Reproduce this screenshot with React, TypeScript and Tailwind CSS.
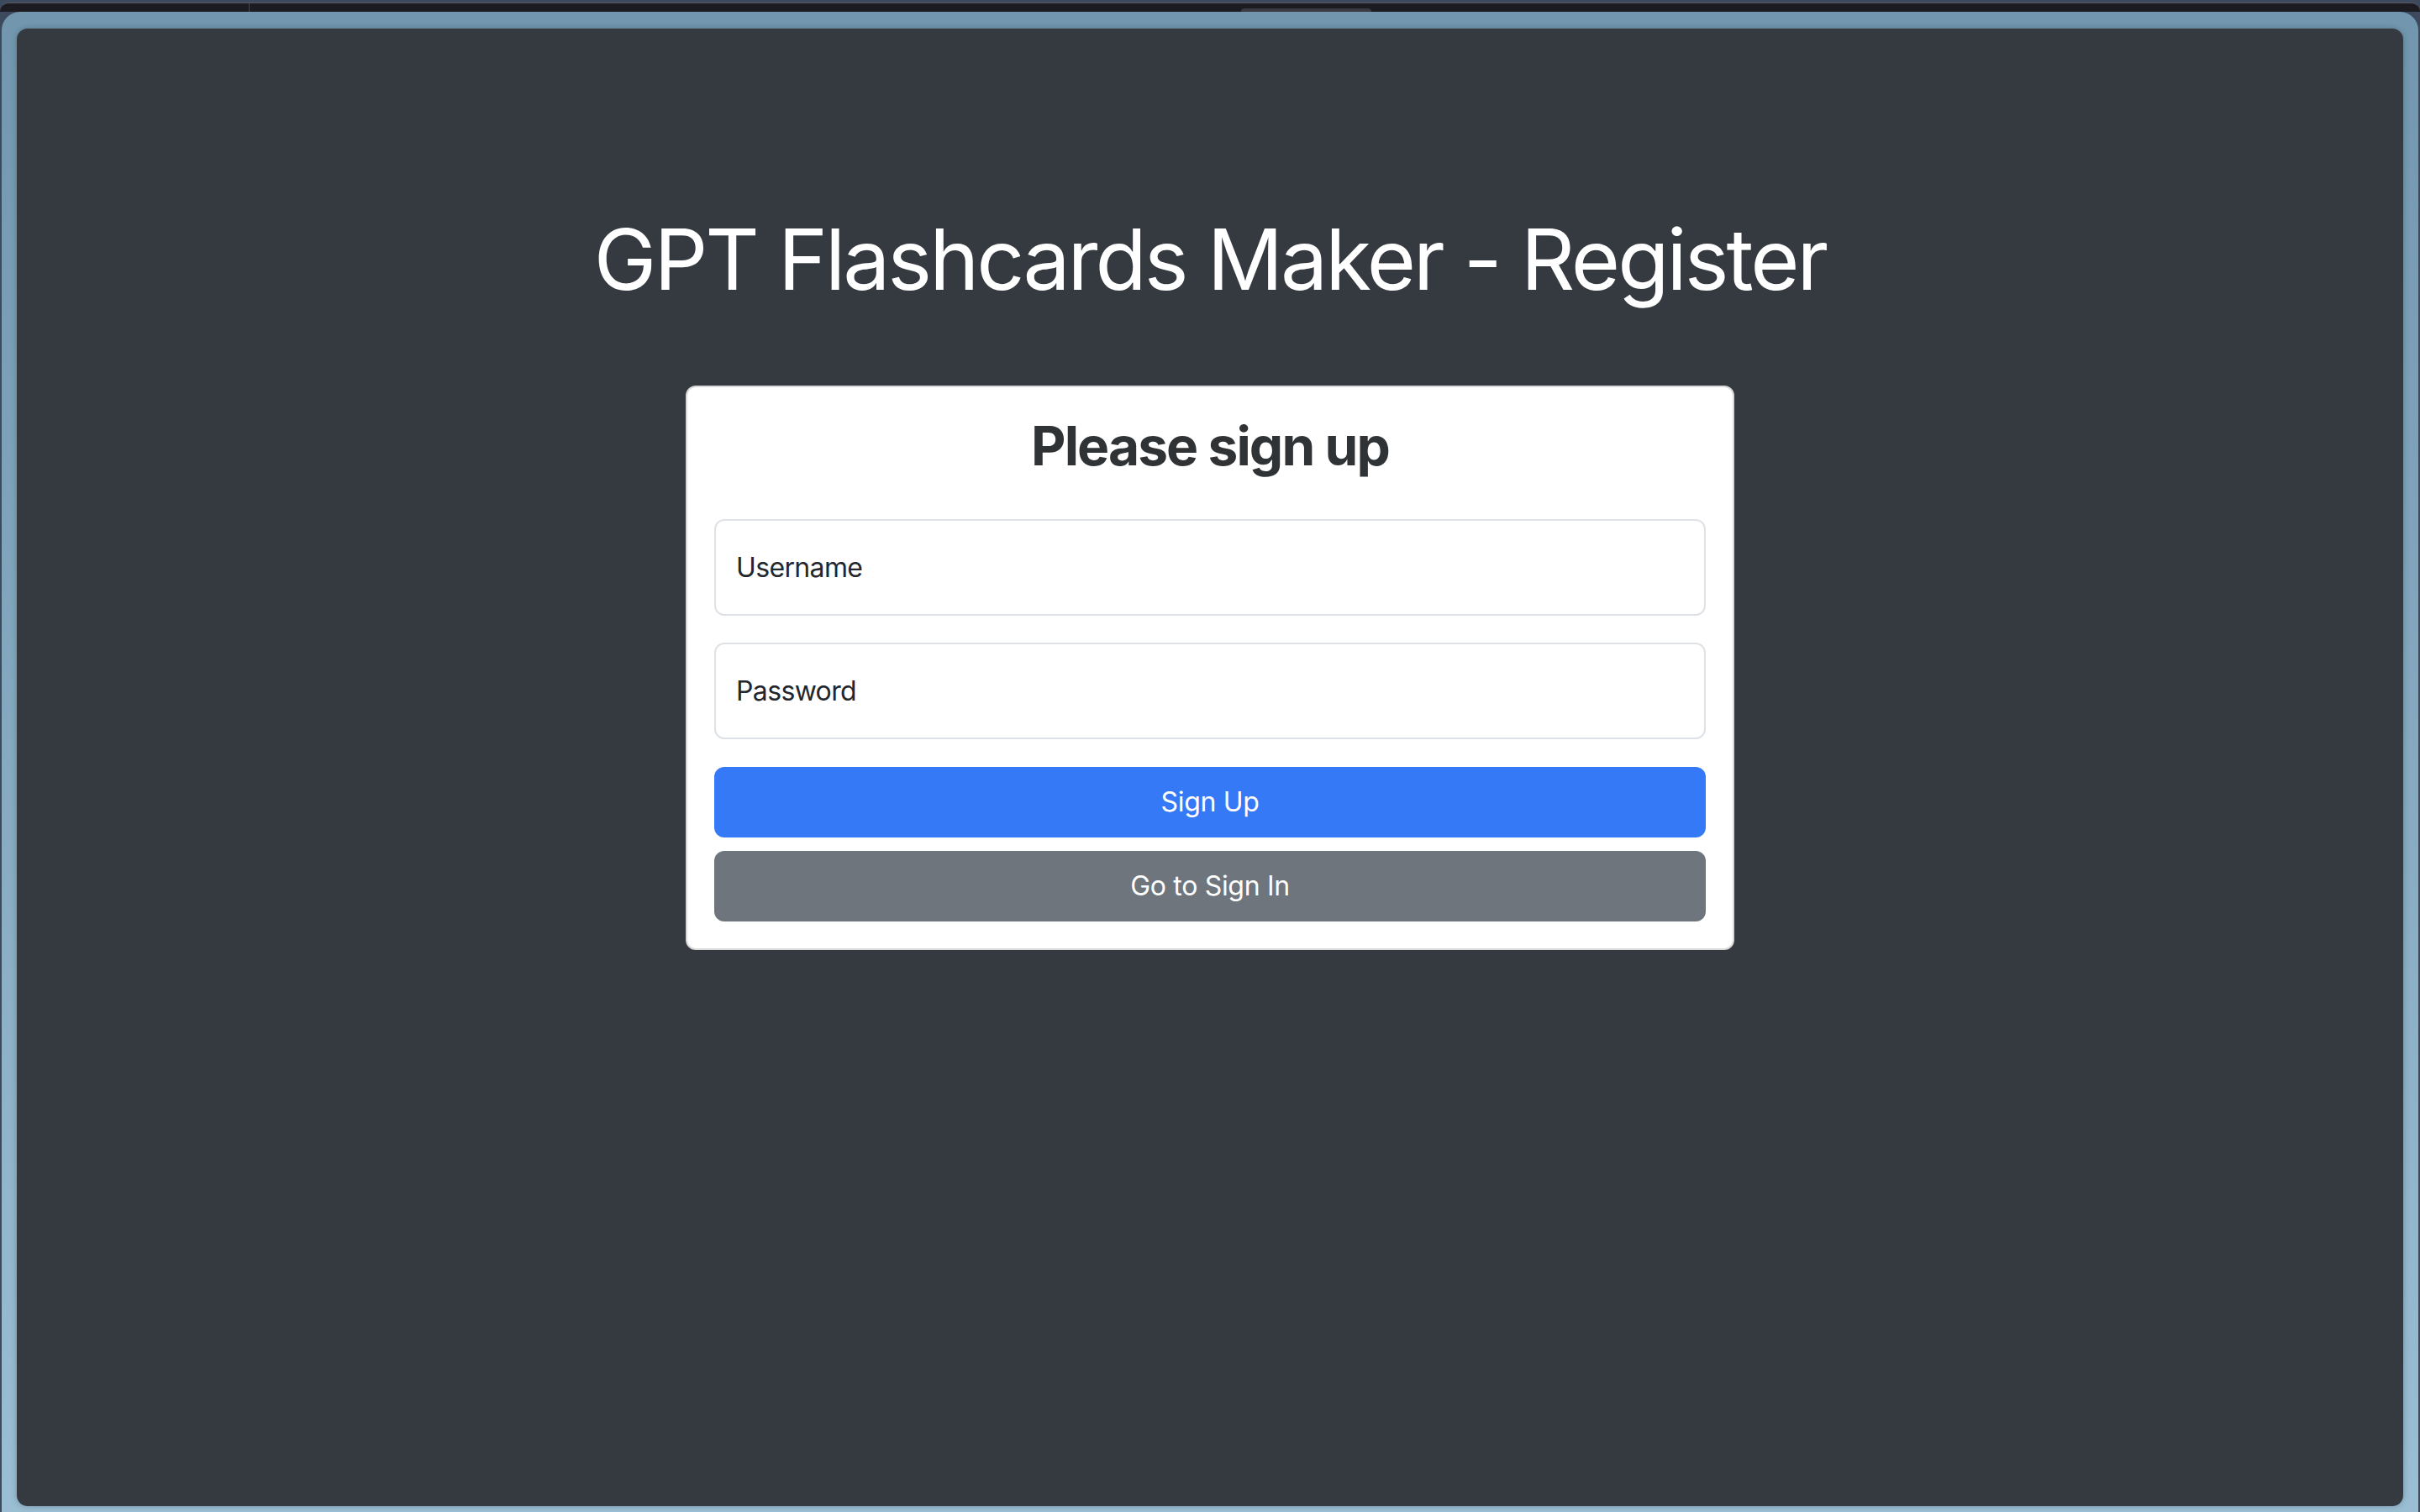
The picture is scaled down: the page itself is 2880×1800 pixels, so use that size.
import * as React from "react"

function FloatingField({ label }: { label: string }) {
  return (
    <div className="flex h-[115px] items-center rounded-[12px] border-2 border-[#dee2e6] bg-white px-[24px] pt-[2px] text-[32px] tracking-[-0.02em] text-[#23272b]">
      {label}
    </div>
  )
}

export default function App() {
  return (
    <div className="h-[1800px] w-[2880px] overflow-hidden bg-[#3d4a5e] pt-[3px] font-['Inter',sans-serif]">
      {/* window chrome behind */}
      <div className="flex h-[11px] items-end rounded-t-[10px] border-t border-[#5a5a62] bg-[#1c1b21]">
        <div className="w-[296px]" />
        <div className="h-full w-px bg-[#46454c]" />
        <div className="ml-[1180px] h-[4px] w-[155px] rounded-t-[4px] bg-[#3b3a42]" />
      </div>

      <div className="mx-[2px] h-[1786px] rounded-t-[22px] bg-gradient-to-b from-[#7196ad] to-[#9abed3] px-[18px] pb-[7px] pt-[20px]">
        <main className="flex h-full flex-col items-center rounded-[13px] bg-[#343a40] shadow-[0_0_6px_rgba(40,60,80,0.35)]">
          <h1 className="mt-[215px] text-[100px] font-normal leading-[1.2] tracking-[-0.03em] text-white">
            GPT Flashcards Maker - Register
          </h1>

          <div className="mt-[90px] w-[1248px] rounded-[12px] border-2 border-[#d9d9d9] bg-white p-[32px]">
            <h2 className="mb-[48px] text-center text-[64px] font-bold leading-[1.2] tracking-[-0.03em] text-[#303336]">
              Please sign up
            </h2>

            <div className="flex flex-col gap-[32px]">
              <FloatingField label="Username" />
              <FloatingField label="Password" />
            </div>

            <button className="mt-[33px] flex h-[84px] w-full items-center justify-center rounded-[12px] bg-[#3579f6] text-[32px] tracking-[-0.01em] text-white">
              Sign Up
            </button>
            <button className="mt-[16px] flex h-[84px] w-full items-center justify-center rounded-[12px] bg-[#6e757d] text-[32px] tracking-[-0.01em] text-white">
              Go to Sign In
            </button>
          </div>
        </main>
      </div>
    </div>
  )
}
